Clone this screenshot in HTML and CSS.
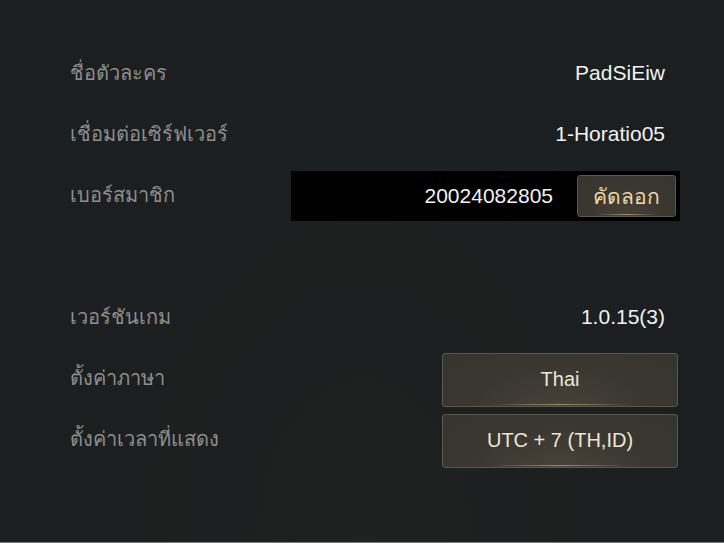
FILE: index.html
```html
<!DOCTYPE html>
<html lang="th">
<head>
  <meta charset="UTF-8">
  <title>ข้อมูลบัญชี</title>
  <link rel="stylesheet" href="styles.css">
</head>
<body>

  <div class="panel">

    <div class="row">
      <span class="label">ชื่อตัวละคร</span>
      <span class="value">PadSiEiw</span>
    </div>

    <div class="row">
      <span class="label">เชื่อมต่อเซิร์ฟเวอร์</span>
      <span class="value">1-Horatio05</span>
    </div>

    <div class="row">
      <span class="label">เบอร์สมาชิก</span>
      <div class="member-box">
        <span class="member-id">20024082805</span>
        <button class="btn copy-btn">คัดลอก</button>
      </div>
    </div>

    <div class="row spacer"></div>

    <div class="row">
      <span class="label">เวอร์ชันเกม</span>
      <span class="value">1.0.15(3)</span>
    </div>

    <div class="row">
      <span class="label">ตั้งค่าภาษา</span>
      <button class="btn select-btn">Thai</button>
    </div>

    <div class="row">
      <span class="label">ตั้งค่าเวลาที่แสดง</span>
      <button class="btn select-btn">UTC + 7 (TH,ID)</button>
    </div>

  </div>

</body>
</html>
```

FILE: styles.css
```css
body {
  margin: 0;
  background: #1b1f1f;
  font-family: "Liberation Sans", "Noto Sans", sans-serif;
}
.panel {
  height: 543px;
  box-sizing: border-box;
  padding: 42px 44px 0 70px;
  border-bottom: 1px solid #7c7c7c;
  background: radial-gradient(ellipse at 50% 100%, #1d2221 0%, #1b1f1f 60%);
}
.row {
  display: flex;
  align-items: center;
  justify-content: space-between;
  height: 61px;
}
.label {
  color: #8e8e8e;
  font-size: 20px;
}
.value {
  color: #f2f2f2;
  font-size: 21px;
  margin-right: 15px;
}
.member-box {
  display: flex;
  align-items: center;
  justify-content: flex-end;
  gap: 24px;
  width: 389px;
  height: 50px;
  box-sizing: border-box;
  padding: 4px;
  background: #000;
  margin-top: 3px;
}
.member-id {
  color: #f2f2f2;
  font-size: 21px;
}
.btn {
  position: relative;
  font-family: "Liberation Sans", "Noto Sans", sans-serif;
  background: radial-gradient(ellipse at 50% 110%, #48433a 0%, #3a3731 55%, #36342f 100%);
  border: 1px solid #5c584d;
  border-radius: 3px;
  box-sizing: border-box;
  cursor: pointer;
}
.btn::after {
  content: "";
  position: absolute;
  left: 20%;
  right: 20%;
  bottom: 1px;
  height: 1px;
  background: linear-gradient(to right, transparent, #7d6f54 30%, #a08a60 50%, #7d6f54 70%, transparent);
}
.copy-btn {
  width: 99px;
  height: 42px;
  color: #ead9a6;
  font-size: 21px;
}
.select-btn {
  width: 236px;
  height: 54px;
  margin-right: 2px;
  margin-top: 4px;
  color: #ece6d4;
  font-size: 20px;
}
```
